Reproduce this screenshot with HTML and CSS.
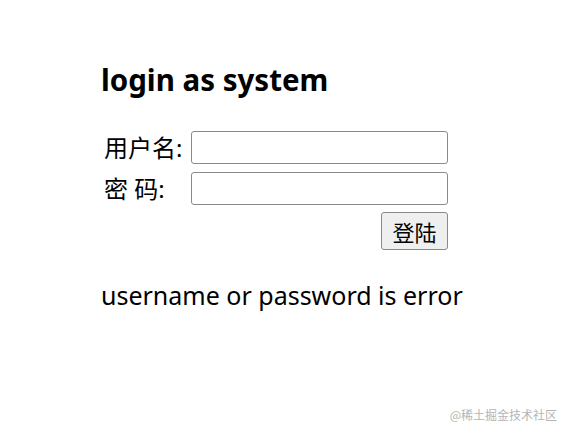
FILE: index.html
```html
<!DOCTYPE html>
<html>
<head>
<meta charset="utf-8">
<link rel="stylesheet" href="styles.css">
</head>
<body>
<div class="page">
  <h1 class="title">login as system</h1>
  <form class="form">
    <label class="label">用户名:</label>
    <input class="field" type="text">
    <label class="label">密 码:</label>
    <input class="field" type="password">
    <button class="btn" type="button">登陆</button>
  </form>
  <p class="msg">username or password is error</p>
</div>
<div class="mark">@稀土掘金技术社区</div>
</body>
</html>
```
FILE: styles.css
```css
html, body {
  margin: 0;
  padding: 0;
  background: #fff;
}
body {
  width: 561px;
  height: 429px;
  position: relative;
  font-family: "Noto Sans", "Noto Sans CJK SC", sans-serif;
  color: #000;
}
.page {
  padding: 59px 0 0 101px;
}
.title {
  margin: 0;
  font-size: 29.5px;
  font-weight: 700;
  line-height: 42px;
}
.form {
  margin-top: 30px;
  display: grid;
  grid-template-columns: 87px 257px;
  row-gap: 8px;
  align-items: center;
}
.label {
  font-size: 24px;
  line-height: 32px;
  padding-left: 3px;
  white-space: pre;
}
.field {
  box-sizing: border-box;
  width: 257px;
  height: 33px;
  margin: 0 0 0 3px;
  border: 1.5px solid #8a8a8a;
  border-radius: 3px;
  background: #fff;
}
.btn {
  grid-column: 2;
  justify-self: end;
  box-sizing: border-box;
  width: 67px;
  height: 38px;
  margin: -1px -3px 0 0;
  padding: 0;
  font-family: "Noto Sans CJK SC", sans-serif;
  font-size: 22px;
  color: #000;
  background: #efefef;
  border: 1.5px solid #8a8a8a;
  border-radius: 3px;
}
.msg {
  margin: 28px 0 0;
  font-size: 25px;
  line-height: 34px;
}
.mark {
  position: absolute;
  right: 4px;
  bottom: 6px;
  font-family: "Noto Sans CJK SC", sans-serif;
  font-size: 12px;
  color: #b5b5b5;
}
```
